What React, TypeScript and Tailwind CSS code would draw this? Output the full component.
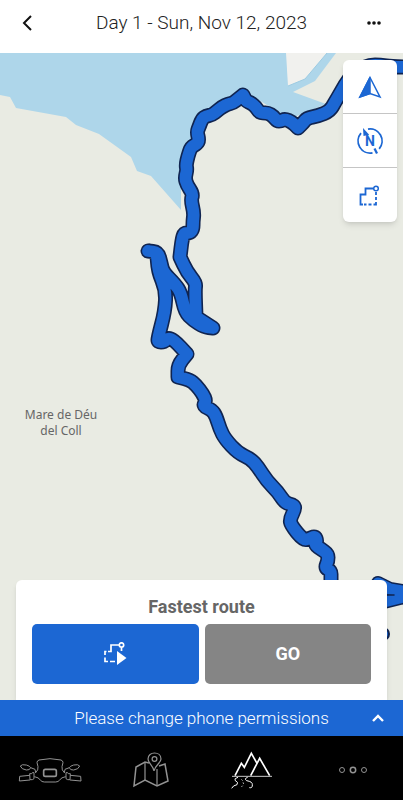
import React from "react";

type Point = [number, number];

// Track points; a repeated point keeps a hard turn there.
const TRACK: Point[] = [
  [412, 67], [392, 67], [380, 65], [370, 65], [358, 70], [349, 78], [341, 92], [335, 102], [330, 111], [318, 116],
  [307, 118], [303, 123], [298, 128], [298, 128], [292, 122], [285, 119], [281, 121], [277, 121], [273, 116], [268, 113],
  [263, 113], [259, 112], [256, 107], [251, 103], [246, 101], [243, 95], [243, 95], [238, 99], [233, 103], [228, 104],
  [222, 107], [217, 111], [212, 115], [206, 116], [202, 119], [199, 127], [197, 132], [199, 140], [197, 144], [191, 147],
  [188, 156], [186, 165], [187, 170], [185, 178], [187, 185], [193, 194], [191, 200], [194, 213], [193, 221], [193, 229],
  [190, 233], [184, 233], [182, 240], [180, 257], [180, 257], [187, 272], [196, 283], [195, 290], [196, 317], [196, 317],
  [213, 328], [213, 328], [204, 327], [193, 320], [185, 312], [181, 293], [175, 284], [163, 272], [161, 263], [158, 252],
  [148, 251], [148, 251], [157, 252], [158, 271], [166, 290], [165, 311], [158, 338], [158, 342], [164, 342], [168, 338],
  [174, 340], [187, 354], [187, 354], [178, 365], [178, 377], [178, 377], [190, 380], [196, 385], [203, 394], [206, 401],
  [203, 406], [212, 410], [216, 416], [220, 429], [225, 439], [238, 453], [251, 459], [258, 467], [267, 481], [278, 492],
  [285, 503], [294, 505], [295, 509], [290, 519], [291, 525], [303, 540], [309, 539], [315, 536], [317, 541], [315, 545],
  [321, 549], [328, 554], [328, 561], [325, 568], [331, 571], [331, 577], [331, 592],
];

function smoothPath(points: Point[]): string {
  let d = `M${points[0][0]} ${points[0][1]}`;
  for (let i = 1; i < points.length - 1; i++) {
    const [x, y] = points[i];
    const [nx, ny] = points[i + 1];
    d += `Q${x} ${y} ${(x + nx) / 2} ${(y + ny) / 2}`;
  }
  const last = points[points.length - 1];
  return `${d}L${last[0]} ${last[1]}`;
}

const ROUTE = smoothPath(TRACK);
const SPUR = "M378 583L390 589L402 591L412 594M412 594L400 598L380 603";

function MapCanvas() {
  return (
    <svg
      className="absolute inset-0 h-full w-full"
      viewBox="0 53 403 647"
      preserveAspectRatio="xMidYMin slice"
      role="img"
      aria-label="Route map"
    >
      <path d="M0 53H403V700H0Z" fill="#e9ebe3" />
      <path
        d="M0 53H336L315 81L293 92L326 104L297 116L285 116L262 102L243 92L210 112L196 125L193 140L181 160L181 210L151 176L137 171L131 157L99 134L76 125L66 117L16 108L10 97L0 95Z"
        fill="#aed6ea"
      />
      <path d="M286 53H327L305 79L288 86Z" fill="#f1f1ee" />
      <path d="M327 53L305 79L288 86" fill="none" stroke="#9dcbe2" />
      <circle cx="383" cy="634" r="6" fill="#1c67d3" stroke="#102450" strokeWidth="2" />
      <g fill="none" strokeLinecap="round" strokeLinejoin="round">
        <path d={SPUR} stroke="#102450" strokeWidth="14" />
        <path d={SPUR} stroke="#1c67d3" strokeWidth="11" />
        <path d="M387 595H394" stroke="#102450" strokeWidth="1.5" />
        <path d={ROUTE} stroke="#102450" strokeWidth="15" />
        <path d={ROUTE} stroke="#1c67d3" strokeWidth="11.8" />
      </g>
    </svg>
  );
}

function HeadingIcon() {
  return (
    <svg width="24" height="24" viewBox="0 0 24 24" fill="none" stroke="#1c67d3" strokeWidth="1.5">
      <path d="M12 2.5L22 22L12 18.5L2 22Z" />
      <path d="M12 2.5V18.5L2 22Z" fill="#1c67d3" />
    </svg>
  );
}

function CompassIcon() {
  return (
    <svg width="28" height="28" viewBox="0 0 28 28" fill="none" stroke="#1c67d3" strokeWidth="1.8">
      <path d="M12 2.2A12 12 0 0 1 23.2 21.8M16.5 25.8A12 12 0 0 1 5 6.2" />
      <path d="M7 1L13.2 7.8L7.5 9Z" fill="#1c67d3" stroke="none" />
      <path d="M18.5 21.5L21 26.5" strokeWidth="2.2" />
      <text x="14" y="19" textAnchor="middle" fill="#1c67d3" stroke="none" className="font-['Roboto',sans-serif] text-[14px] font-bold">N</text>
    </svg>
  );
}

function RouteIcon() {
  return (
    <svg width="24" height="24" viewBox="0 0 24 24" fill="none" stroke="#1c67d3" strokeWidth="1.8">
      <path d="M5 21.5H2.5V11.5H7.5V5.5H15.5" />
      <circle cx="18" cy="5.5" r="2.3" strokeWidth="1.5" />
      <path d="M18 9V12M18 14V17M18 19V21.5H15.5M13.5 21.5H10.5M8.5 21.5H6" />
    </svg>
  );
}

function RoutePlayIcon() {
  return (
    <svg width="24" height="24" viewBox="0 0 24 24" fill="none" stroke="#ffffff" strokeWidth="1.7">
      <path d="M5 9.5H8V3H16" />
      <circle cx="18.5" cy="3" r="2.2" />
      <path d="M18.5 5.5V9" />
      <path d="M3.5 9.5H2V13M2 15.5V19.5H5M7 19.5H12" />
      <path d="M14 9L23.5 16L14 23Z" fill="#ffffff" stroke="none" />
    </svg>
  );
}

function HandlebarIcon() {
  return (
    <svg width="64" height="28" viewBox="55 62 192 84" fill="none" stroke="#929292" strokeWidth="3" strokeLinejoin="round">
      <path d="M107 113Q117 104 115 94L112 82Q112 76 118 74Q151 66 184 74Q190 76 190 82L187 94Q185 104 195 113" />
      <path d="M104 124Q117 126 122 134Q126 140 134 140H168Q176 140 180 134Q185 126 198 124" />
      <rect x="132" y="102" width="38" height="21" rx="5" strokeWidth="5" />
      <path d="M90 120L60 123L59 137L91 134M90 115H96L98 112H103V130L98 133H91ZM212 120L243 123L244 137L211 134M212 115H206L204 112H199V130L204 133H211Z" />
      <path d="M93 97Q91 105 80 104Q65 102 62 92Q66 86 80 89Q91 92 93 97L106 102L108 112M209 97Q211 105 222 104Q237 102 240 92Q236 86 222 89Q211 92 209 97L196 102L194 112" />
    </svg>
  );
}

function MapPinIcon() {
  return (
    <svg width="36" height="36" viewBox="0 0 36 36" fill="none" stroke="#929292" strokeWidth="1.2">
      <path d="M16 11L12 10L3 15L1 34L12 28L24 34L35 29L32 12L26 14" strokeWidth="1.5" />
      <path d="M12 10V28M24 17V34" />
      <path d="M21 19C20 13 15 11 15 7C15 -1 28 -1 28 7C28 11 22 13 21 19Z" />
      <circle cx="21.5" cy="7" r="2.4" />
    </svg>
  );
}

function MountainIcon() {
  return (
    <svg width="42" height="40" viewBox="96 48 126 120" fill="none" stroke="#ffffff" strokeWidth="5">
      <path d="M108 125L127 88L136 100L157 58L174 88M155 125L182 73L212 125" />
      <path d="M99 127H219" stroke="#c9c9c9" strokeWidth="3" />
      <path d="M117 130Q105 133 108 139Q120 145 114 152Q102 154 98 163M146 130Q134 134 143 140Q161 143 160 152Q161 163 151 161" strokeWidth="3" />
      <path d="M127 136L131 140M132 145L134 150M131 155L127 159" strokeWidth="2" />
    </svg>
  );
}

function MoreIcon() {
  return (
    <svg width="30" height="10" viewBox="0 0 30 10" fill="none" stroke="#929292">
      <circle cx="4" cy="5" r="2.5" />
      <circle cx="15" cy="5" r="2.7" strokeWidth="1.5" />
      <circle cx="26" cy="5" r="2.5" />
    </svg>
  );
}

const toolButton = "flex h-[54px] w-full items-center justify-center";
const tab = "flex h-full items-center justify-center";

export default function App() {
  return (
    <div className="flex min-h-screen flex-col bg-white font-['Roboto',sans-serif]">
      <header className="flex h-[53px] shrink-0 items-center justify-between px-4 pb-2">
        <button aria-label="Back" className="flex size-6 items-center justify-center">
          <svg width="12" height="18" viewBox="0 0 12 18" fill="none" stroke="#111111" strokeWidth="2">
            <path d="M9 2L2 9L9 16" />
          </svg>
        </button>
        <h1 className="text-[19px] leading-6 font-light text-[#222222]">Day 1 - Sun, Nov 12, 2023</h1>
        <button aria-label="More options" className="flex size-6 items-center justify-center">
          <svg width="16" height="4" viewBox="0 0 16 4" fill="#111111">
            <circle cx="2" cy="2" r="1.8" />
            <circle cx="7" cy="2" r="1.8" />
            <circle cx="12" cy="2" r="1.8" />
          </svg>
        </button>
      </header>

      <main className="relative flex flex-1 flex-col justify-between overflow-hidden bg-[#e9ebe3]">
        <MapCanvas />
        <p className="absolute top-[354px] left-[61px] -translate-x-1/2 text-center font-['Noto_Sans',sans-serif] text-xs leading-4 whitespace-nowrap text-[#666666]">
          Mare de Déu
          <br />
          del Coll
        </p>

        <div className="relative mt-[7px] mr-[6px] flex w-[54px] flex-col divide-y divide-[#c5c5c5] self-end rounded-md bg-white shadow-md">
          <button aria-label="Center on heading" className={toolButton}>
            <HeadingIcon />
          </button>
          <button aria-label="North up" className={toolButton}>
            <CompassIcon />
          </button>
          <button aria-label="Show route" className={toolButton}>
            <RouteIcon />
          </button>
        </div>

        <section className="relative mx-4 rounded-t-md bg-white px-4 pt-[15px] pb-4 shadow-md">
          <h2 className="text-center text-lg leading-6 font-bold text-[#666666]">Fastest route</h2>
          <div className="mt-[5px] grid grid-cols-2 gap-1.5">
            <button aria-label="Simulate route" className="flex h-[60px] items-center justify-center rounded-[5px] bg-[#1c67d3]">
              <RoutePlayIcon />
            </button>
            <button className="h-[60px] rounded-[5px] bg-[#858585] text-lg font-bold text-white">GO</button>
          </div>
        </section>
      </main>

      <button className="relative flex h-9 shrink-0 items-center justify-center bg-[#1c67d3] px-4 text-[17px] leading-6 font-light text-white">
        Please change phone permissions
        <svg className="absolute right-[18px]" width="14" height="10" viewBox="0 0 14 10" fill="none" stroke="#ffffff" strokeWidth="2.4">
          <path d="M2 8L7 3L12 8" />
        </svg>
      </button>

      <nav className="grid h-16 shrink-0 grid-cols-4 items-center bg-black pt-1">
        <button aria-label="Ride" className={tab}>
          <HandlebarIcon />
        </button>
        <button aria-label="Map" className={tab}>
          <MapPinIcon />
        </button>
        <button aria-label="Adventures" className={tab}>
          <MountainIcon />
        </button>
        <button aria-label="More" className={tab}>
          <MoreIcon />
        </button>
      </nav>
    </div>
  );
}
